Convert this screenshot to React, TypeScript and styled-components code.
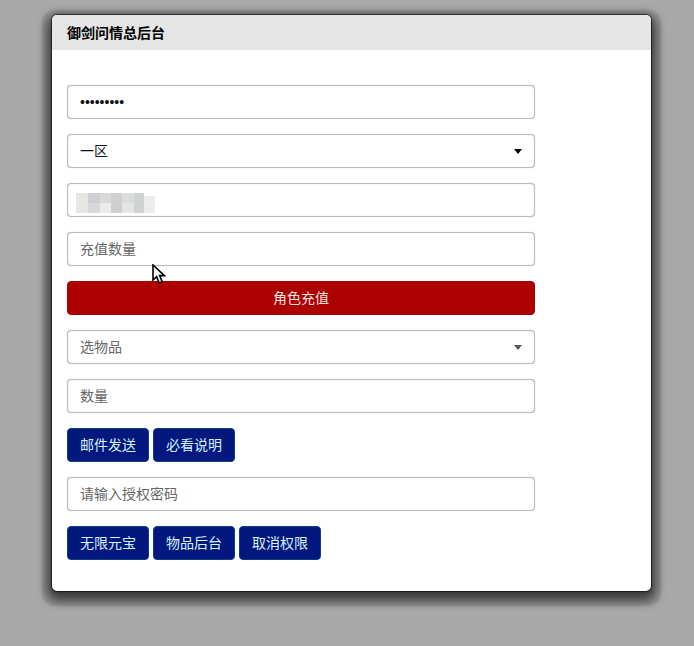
import React from "react";
import styled, { createGlobalStyle } from "styled-components";

const Global = createGlobalStyle`
	html, body {
		margin: 0;
		padding: 0;
		background: #a9a9a9;
	}
	* {
		box-sizing: border-box;
	}
`

const mosaic = [
	{ x: 0, y: 0, w: 12, h: 20, c: "#e6e6e2" },
	{ x: 12, y: 0, w: 12, h: 10, c: "#cdcfd3" },
	{ x: 12, y: 10, w: 12, h: 10, c: "#d8d8d8" },
	{ x: 24, y: 0, w: 11, h: 10, c: "#d9d9d9" },
	{ x: 24, y: 10, w: 11, h: 10, c: "#ebebe8" },
	{ x: 35, y: 0, w: 11, h: 20, c: "#cfcfcf" },
	{ x: 46, y: 0, w: 12, h: 10, c: "#dcdcdc" },
	{ x: 46, y: 10, w: 12, h: 10, c: "#e5e5e5" },
	{ x: 58, y: 0, w: 10, h: 20, c: "#cfd2d2" },
	{ x: 68, y: 3, w: 11, h: 17, c: "#ececec" },
]

export default function App() {
	return (
		<Page>
			<Global />
			<Card>
				<Header>御剑问情总后台</Header>
				<Body>
					<Field type="password" defaultValue="123456789" />
					<SelectWrap>
						<Select defaultValue="1">
							<option value="1">一区</option>
						</Select>
						<Arrow viewBox="0 0 8 5" $dark><path d="M0 0h8L4 5z" /></Arrow>
					</SelectWrap>
					<MaskedRow>
						<Field />
						<Mosaic viewBox="0 0 79 20">
							{mosaic.map((m, i) => (
								<rect key={i} x={m.x} y={m.y} width={m.w} height={m.h} fill={m.c} />
							))}
						</Mosaic>
					</MaskedRow>
					<Field placeholder="充值数量" />
					<RedButton>角色充值</RedButton>
					<SelectWrap>
						<Select defaultValue="" $muted>
							<option value="">选物品</option>
						</Select>
						<Arrow viewBox="0 0 8 5"><path d="M0 0h8L4 5z" /></Arrow>
					</SelectWrap>
					<Field placeholder="数量" />
					<ButtonRow>
						<BlueButton>邮件发送</BlueButton>
						<BlueButton>必看说明</BlueButton>
					</ButtonRow>
					<Field placeholder="请输入授权密码" />
					<ButtonRow>
						<BlueButton>无限元宝</BlueButton>
						<BlueButton>物品后台</BlueButton>
						<BlueButton>取消权限</BlueButton>
					</ButtonRow>
				</Body>
				<Cursor viewBox="0 0 14 21">
					<path d="M1 1v15l3.6-3.3 2.6 6.2 3-1.3-2.6-6h4.8z" fill="#fff" stroke="#000" strokeWidth="1.6" strokeLinejoin="miter" />
				</Cursor>
			</Card>
		</Page>
	)
}

const Page = styled.div`
	min-height: 646px;
	padding: 15px 0 55px 52px;
	font-family: "Liberation Sans", "Noto Sans CJK SC", sans-serif;
`

const Card = styled.div`
	position: relative;
	width: 599px;
	height: 576px;
	background: #fff;
	border-radius: 5px;
	box-shadow:
		0 0 1px 1px rgba(0, 0, 0, 0.6),
		0 5px 2px 10px rgba(0, 0, 0, 0.1),
		0 5px 11px 5px rgba(0, 0, 0, 0.62);
`

const Header = styled.div`
	height: 35px;
	padding: 0 15px;
	background: #e5e5e5;
	border-radius: 5px 5px 0 0;
	color: #000;
	font-size: 14px;
	font-weight: 700;
	line-height: 36px;
`

const Body = styled.div`
	display: flex;
	flex-direction: column;
	gap: 15px;
	width: 483px;
	padding: 35px 0 0 15px;
`

const Field = styled.input`
	display: block;
	width: 100%;
	height: 34px;
	padding: 0 12px;
	background: #fff;
	border: 1px solid #bdbdbd;
	border-radius: 4px;
	box-shadow: 0 0 1px #b5b5b5, inset 0 0 1px #b5b5b5;
	color: #111;
	font: inherit;
	font-size: 14px;
	outline: none;

	&::placeholder {
		color: #666;
		opacity: 1;
	}
`

const SelectWrap = styled.div`
	position: relative;
`

const Select = styled.select<{ $muted?: boolean }>`
	display: block;
	width: 100%;
	height: 34px;
	padding: 0 12px;
	appearance: none;
	background: #fff;
	border: 1px solid #bdbdbd;
	border-radius: 4px;
	box-shadow: 0 0 1px #b5b5b5, inset 0 0 1px #b5b5b5;
	color: ${(p) => (p.$muted ? "#666" : "#111")};
	font: inherit;
	font-size: 14px;
	outline: none;
`

const Arrow = styled.svg<{ $dark?: boolean }>`
	position: absolute;
	top: 15px;
	right: 13px;
	width: 8px;
	height: 5px;
	fill: ${(p) => (p.$dark ? "#000" : "#555")};
`

const MaskedRow = styled.div`
	position: relative;
`

const Mosaic = styled.svg`
	position: absolute;
	top: 10px;
	left: 9px;
	width: 79px;
	height: 20px;
	filter: blur(0.5px);
`

const RedButton = styled.button`
	display: block;
	width: 100%;
	height: 34px;
	padding: 0 0 2px;
	background: #ad0000;
	border: 1px solid #a80000;
	border-radius: 4px;
	color: #f6e6e0;
	font: inherit;
	font-size: 14px;
`

const ButtonRow = styled.div`
	display: flex;
	gap: 4px;
`

const BlueButton = styled.button`
	width: 82px;
	height: 34px;
	padding: 0 0 2px;
	background: #02187f;
	border: 1px solid #0a3f85;
	border-radius: 4px;
	color: #d8f2fa;
	font: inherit;
	font-size: 14px;
`

const Cursor = styled.svg`
	position: absolute;
	top: 249px;
	left: 100px;
	width: 14px;
	height: 21px;
`
